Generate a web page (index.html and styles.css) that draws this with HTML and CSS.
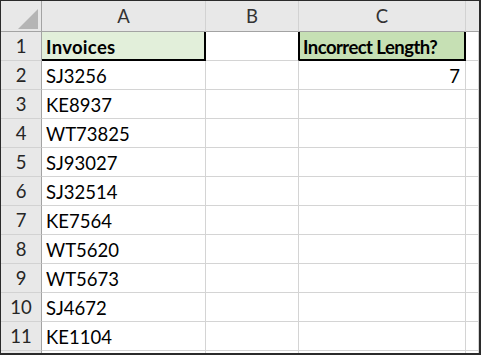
FILE: index.html
```html
<!DOCTYPE html>
<html>
<head>
<meta charset="utf-8">
<link rel="stylesheet" href="styles.css">
</head>
<body>
<div class="frame">
  <div class="sheet">
    <div class="hd corner"><span class="tri"></span></div>
    <div class="hd col">A</div>
    <div class="hd col">B</div>
    <div class="hd col">C</div>
    <div class="hd col last"></div>

    <div class="hd row">1</div>
    <div class="c head-a">Invoices</div>
    <div class="c edge-r"></div>
    <div class="c head-c">Incorrect Length?</div>
    <div class="c"></div>

    <div class="hd row">2</div>
    <div class="c">SJ3256</div>
    <div class="c"></div>
    <div class="c num">7</div>
    <div class="c"></div>

    <div class="hd row">3</div>
    <div class="c">KE8937</div>
    <div class="c"></div>
    <div class="c"></div>
    <div class="c"></div>

    <div class="hd row">4</div>
    <div class="c">WT73825</div>
    <div class="c"></div>
    <div class="c"></div>
    <div class="c"></div>

    <div class="hd row">5</div>
    <div class="c">SJ93027</div>
    <div class="c"></div>
    <div class="c"></div>
    <div class="c"></div>

    <div class="hd row">6</div>
    <div class="c">SJ32514</div>
    <div class="c"></div>
    <div class="c"></div>
    <div class="c"></div>

    <div class="hd row">7</div>
    <div class="c">KE7564</div>
    <div class="c"></div>
    <div class="c"></div>
    <div class="c"></div>

    <div class="hd row">8</div>
    <div class="c">WT5620</div>
    <div class="c"></div>
    <div class="c"></div>
    <div class="c"></div>

    <div class="hd row">9</div>
    <div class="c">WT5673</div>
    <div class="c"></div>
    <div class="c"></div>
    <div class="c"></div>

    <div class="hd row">10</div>
    <div class="c">SJ4672</div>
    <div class="c"></div>
    <div class="c"></div>
    <div class="c"></div>

    <div class="hd row">11</div>
    <div class="c">KE1104</div>
    <div class="c"></div>
    <div class="c"></div>
    <div class="c"></div>

    <div class="hd row"></div>
    <div class="c"></div>
    <div class="c"></div>
    <div class="c"></div>
    <div class="c"></div>
  </div>
</div>
</body>
</html>
```

FILE: styles.css
```css
html, body {
  margin: 0;
  padding: 0;
  background: #ffffff;
}

.frame {
  width: 478px;
  height: 352px;
  border-top: 1px solid #2b2b2b;
  border-left: 1px solid #2b2b2b;
  border-right: 2px solid #2b2b2b;
  border-bottom: 2px solid #2b2b2b;
  overflow: hidden;
  background: #ffffff;
}

.sheet {
  display: grid;
  grid-template-columns: 41px 164px 93px 167px 13px;
  grid-template-rows: 31px repeat(12, 29px);
  font-family: Lato, "Open Sans", sans-serif;
  font-size: 18.5px;
  color: #000000;
}

.hd {
  background: #e8e8e8;
  color: #262626;
  box-sizing: border-box;
  display: flex;
  justify-content: center;
  line-height: 30px;
}

.col {
  border-right: 1px solid #d2d2d2;
  border-bottom: 1px solid #a3a3a3;
  color: #333333;
}

.col.last {
  border-right: none;
}

.corner {
  border-right: 1px solid #a3a3a3;
  border-bottom: 1px solid #a3a3a3;
  position: relative;
}

.tri {
  position: absolute;
  left: 17px;
  top: 8px;
  width: 0;
  height: 0;
  border-style: solid;
  border-width: 0 0 20px 20px;
  border-color: transparent transparent #b5b5b5 transparent;
}

.row {
  border-right: 1px solid #a3a3a3;
  border-bottom: 1px solid #d2d2d2;
  line-height: 29px;
}

.c {
  box-sizing: border-box;
  border-right: 1px solid #d4d4d4;
  border-bottom: 1px solid #d4d4d4;
  padding: 1px 4px 0 4px;
  line-height: 28px;
  white-space: nowrap;
  overflow: hidden;
}

.head-a {
  background: #e2efda;
  font-weight: 700;
  letter-spacing: 0.3px;
  border-right: 1px solid #000000;
  border-bottom: 1px solid #000000;
  box-shadow: inset -1px -1px 0 #000000;
}

.edge-r {
  border-right: 1px solid #000000;
}

.head-c {
  background: #c6e0b4;
  font-weight: 700;
  letter-spacing: -0.55px;
  border-right: 1px solid #000000;
  border-bottom: 1px solid #000000;
  box-shadow: inset 1px -1px 0 #000000, inset -1px 0 0 #000000;
}

.num {
  text-align: right;
  padding-right: 5px;
}
```
